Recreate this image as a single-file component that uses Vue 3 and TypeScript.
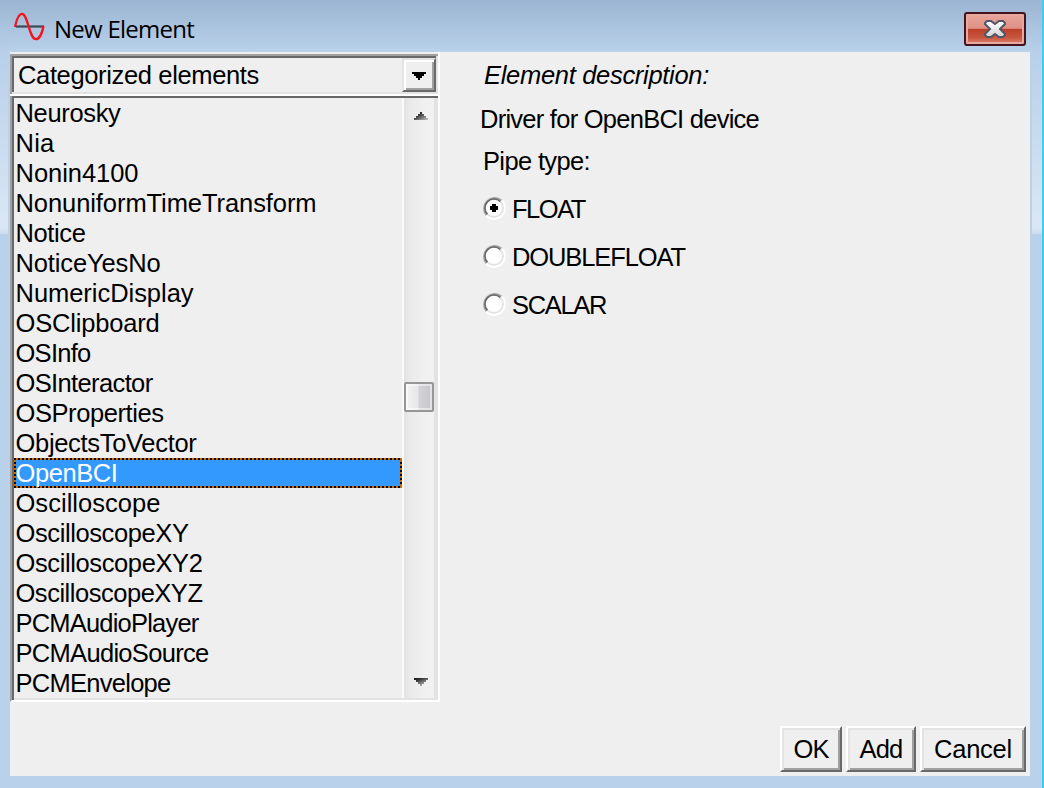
<script setup lang="ts">
import { ref } from 'vue'

interface Label {
  text: string
  width: number
}

const elements: Label[] = [
  { text: 'Neurosky', width: 105 },
  { text: 'Nia', width: 39 },
  { text: 'Nonin4100', width: 123 },
  { text: 'NonuniformTimeTransform', width: 301 },
  { text: 'Notice', width: 70 },
  { text: 'NoticeYesNo', width: 145 },
  { text: 'NumericDisplay', width: 178 },
  { text: 'OSClipboard', width: 144 },
  { text: 'OSInfo', width: 75 },
  { text: 'OSInteractor', width: 137 },
  { text: 'OSProperties', width: 148 },
  { text: 'ObjectsToVector', width: 181 },
  { text: 'OpenBCI', width: 102 },
  { text: 'Oscilloscope', width: 145 },
  { text: 'OscilloscopeXY', width: 173 },
  { text: 'OscilloscopeXY2', width: 187 },
  { text: 'OscilloscopeXYZ', width: 187 },
  { text: 'PCMAudioPlayer', width: 183 },
  { text: 'PCMAudioSource', width: 193 },
  { text: 'PCMEnvelope', width: 155 },
]
const pipeTypes: Label[] = [
  { text: 'FLOAT', width: 73 },
  { text: 'DOUBLEFLOAT', width: 173 },
  { text: 'SCALAR', width: 94 },
]
const actions: Label[] = [
  { text: 'OK', width: 35 },
  { text: 'Add', width: 43 },
  { text: 'Cancel', width: 78 },
]

const selected = ref('OpenBCI')
const pipe = ref('FLOAT')

// Adjusts tracking so that a label takes up its given width.
const vFit = {
  mounted(el: HTMLElement, binding: { value: number }) {
    const natural = el.getBoundingClientRect().width
    const count = (el.textContent ?? '').length
    el.style.letterSpacing = `${(binding.value - natural) / count}px`
  },
}
</script>

<template>
  <div class="window">
    <header class="titlebar">
      <svg class="logo" width="32" height="30" viewBox="0 0 32 30">
        <path d="M2 14.500H30" stroke="#3d4858" stroke-width="2.200" />
        <path d="M1 15C3 5 5 1.800 8 1.800C14 1.800 15 27.200 22 27.200C25 27.200 28 22 29.500 14" fill="none" stroke="#f5141c" stroke-width="2.300" />
      </svg>
      <h1 class="title"><span v-fit="140">New Element</span></h1>
      <button class="close" aria-label="Close">
        <svg width="22" height="18" viewBox="0 0 22 18">
          <defs>
            <linearGradient id="crossFill" x1="0" y1="0" x2="0" y2="1">
              <stop offset="0" stop-color="#fff" />
              <stop offset="1" stop-color="#d4d4d4" />
            </linearGradient>
          </defs>
          <path d="M3 1H7L11 4L15 1H19L21 3V4L16 9L21 14V15L19 17H15L11 14L7 17H3L1 15V14L6 9L1 4V3Z" fill="url(#crossFill)" stroke="#535666" stroke-width="2" />
        </svg>
      </button>
    </header>

    <main class="body">
      <section class="left">
        <div class="combo">
          <span class="combo-text"><span v-fit="241">Categorized elements</span></span>
          <button class="drop" aria-label="Open">
            <svg width="14" height="8" viewBox="0 0 14 8" shape-rendering="crispEdges"><path d="M0 0H14V2H12V4H10V6H8V8H6V6H4V4H2V2H0Z" /></svg>
          </button>
        </div>
        <div class="listbox">
          <ul class="list">
            <li v-for="item in elements" :key="item.text" :class="{ selected: item.text === selected }" @click="selected = item.text">
              <span v-fit="item.width">{{ item.text }}</span>
            </li>
          </ul>
          <div class="scrollbar">
            <svg class="arrow" width="14" height="8" viewBox="0 0 14 8" shape-rendering="crispEdges">
              <defs><linearGradient id="arrowUp" x1="0" y1="0" x2="1" y2="1"><stop offset=".25" stop-color="#222" /><stop offset="1" stop-color="#c4c4c4" /></linearGradient></defs>
              <path d="M6 0H8V2H10V4H12V6H14V8H0V6H2V4H4V2H6Z" fill="url(#arrowUp)" />
            </svg>
            <div class="thumb"></div>
            <svg class="arrow" width="14" height="8" viewBox="0 0 14 8" shape-rendering="crispEdges">
              <defs><linearGradient id="arrowDown" x1="0" y1="0" x2=".7" y2="1"><stop offset="0" stop-color="#111" /><stop offset=".3" stop-color="#333" /><stop offset="1" stop-color="#c4c4c4" /></linearGradient></defs>
              <path d="M0 0H14V2H12V4H10V6H8V8H6V6H4V4H2V2H0Z" fill="url(#arrowDown)" />
            </svg>
          </div>
        </div>
      </section>

      <section class="right">
        <p class="heading"><span v-fit="225">Element description:</span></p>
        <p class="description"><span v-fit="279">Driver for OpenBCI device</span></p>
        <p class="pipe"><span v-fit="107">Pipe type:</span></p>
        <div v-for="type in pipeTypes" :key="type.text" class="option" @click="pipe = type.text">
          <svg width="24" height="24" viewBox="0 0 24 24">
            <circle cx="12" cy="12" r="10" fill="#fff" />
            <path d="M4.600 19.400A10.500 10.500 0 0 1 19.400 4.600" fill="none" stroke="#a0a0a0" stroke-width="2" />
            <path d="M5.600 18.400A9 9 0 0 1 18.400 5.600" fill="none" stroke="#696969" stroke-width="1.500" />
            <path d="M18.400 5.600A9 9 0 0 1 5.600 18.400" fill="none" stroke="#e3e3e3" stroke-width="2" />
            <path d="M19.800 4.200A11 11 0 0 1 4.200 19.800" fill="none" stroke="#fff" stroke-width="2" />
            <path v-if="pipe === type.text" d="M10 8H14V10H16V14H14V16H10V14H8V10H10Z" shape-rendering="crispEdges" />
          </svg>
          <span v-fit="type.width">{{ type.text }}</span>
        </div>
      </section>

      <footer class="actions">
        <button v-for="action in actions" :key="action.text" class="action" :class="action.text.toLowerCase()">
          <span v-fit="action.width">{{ action.text }}</span>
        </button>
      </footer>
    </main>
  </div>
</template>

<style>
body {
  margin: 0;
  overflow: hidden;
}
</style>

<style scoped>
* {
  box-sizing: border-box;
}
.window {
  width: 1044px;
  height: 788px;
  padding: 0 12px 12px 10px;
  border-right: 2px solid #43cbf5;
  background:
    linear-gradient(#9bb5d2 0, #b7cfe9 50px, #dbe7f4 228px, #c8dbee 234px, transparent 234px) 0 0 / 8px 100% no-repeat,
    linear-gradient(#9bb5d2 0, #b7cfe9 50px, #dbe7f4 228px, #c8dbee 234px, transparent 234px) 100% 0 / 10px 100% no-repeat,
    linear-gradient(#9bb5d2 0, #b9d1ea 52px);
  font-family: "Liberation Sans", Arial, sans-serif;
  font-size: 25.5px;
  color: #000;
  white-space: nowrap;
}
.titlebar {
  display: flex;
  height: 52px;
  padding: 12px 4px 0 4px;
}
.logo {
  flex: none;
}
.title {
  flex: 1;
  margin: 0 0 0 8px;
  font: 24px/34px "Open Sans", "Noto Sans", sans-serif;
}
.close {
  display: flex;
  align-items: center;
  justify-content: center;
  width: 62px;
  height: 34px;
  padding: 0;
  border: 2px solid #43141f;
  border-radius: 3px;
  background: linear-gradient(#e8a69b, #df9085 48%, #b93f27 50%, #c95941 80%, #dc8575);
  box-shadow: inset 0 0 0 2px #e9a89e;
}
.close svg {
  flex: none;
}
.body {
  display: grid;
  grid-template: 650px 74px / 430px 590px;
  height: 724px;
  background: #efefef;
}
.combo {
  display: flex;
  width: 430px;
  height: 44px;
  padding-top: 2px;
  border-right: 2px solid #fff;
  border-bottom: 2px solid #fff;
  background: linear-gradient(#a0a0a0, #a0a0a0) 0 2px / 428px 2px no-repeat,
    linear-gradient(#696969, #696969) 2px 4px / 424px 2px no-repeat,
    linear-gradient(#a0a0a0, #a0a0a0) 0 2px / 2px 40px no-repeat,
    linear-gradient(#696969, #696969) 2px 4px / 2px 36px no-repeat,
    linear-gradient(#e3e3e3, #e3e3e3) 0 100% / 428px 2px no-repeat,
    linear-gradient(#e3e3e3, #e3e3e3) 426px 4px / 2px 38px no-repeat;
}
.combo-text {
  flex: 1;
  padding: 6px 0 0 8px;
  line-height: 30px;
}
.drop {
  display: flex;
  align-items: center;
  justify-content: center;
  width: 34px;
  height: 34px;
  margin: 4px 2px 0 0;
  padding: 2px 0 0;
  border: 2px solid;
  border-color: #e3e3e3 #696969 #696969 #e3e3e3;
  background: #efefef;
  box-shadow: inset 2px 2px #fff, inset -2px -2px #a0a0a0;
}
.listbox {
  display: flex;
  width: 430px;
  height: 606px;
  padding: 2px;
  border-left: 2px solid #a0a0a0;
  border-right: 2px solid #fff;
  border-bottom: 2px solid #fff;
  box-shadow: inset 2px 2px #696969, inset -2px -2px #e3e3e3;
}
.list {
  width: 388px;
  margin: 0;
  padding: 0;
  list-style: none;
}
.list li {
  height: 30px;
  padding-left: 1.5px;
  line-height: 30px;
}
.list li.selected {
  color: #fff;
  background:
    repeating-linear-gradient(90deg, #000 0 2px, #d06800 2px 4px) 0 0 / 100% 2px no-repeat,
    repeating-linear-gradient(90deg, #000 0 2px, #d06800 2px 4px) 0 100% / 100% 2px no-repeat,
    repeating-linear-gradient(#000 0 2px, #d06800 2px 4px) 0 0 / 2px 100% no-repeat,
    repeating-linear-gradient(#000 0 2px, #d06800 2px 4px) 100% 0 / 2px 100% no-repeat,
    #3399ff;
}
.scrollbar {
  display: flex;
  flex-direction: column;
  align-items: center;
  justify-content: space-between;
  width: 34px;
  padding: 14px 0 12px;
  border-left: 2px solid #fafafa;
  border-right: 2px solid #e3e3e3;
  background: linear-gradient(90deg, #e3e3e3 0 2px, #e9e9e9 4px, #f0f0f0 20px, #f1f1f1);
}
.arrow {
  margin-left: 4px;
}
.thumb {
  width: 30px;
  height: 30px;
  margin-top: -5px;
  border: 2px solid #969696;
  border-radius: 2px;
  background: linear-gradient(90deg, #f4f4f4, #e6e6e7 46%, #d3d3d7 50%, #c5c5cb);
  box-shadow: inset 0 0 0 2px rgba(255, 255, 255, .5);
}
.right {
  padding: 8px 0 0 42px;
}
.right p {
  height: 30px;
  margin: 0;
  line-height: 30px;
}
.right .heading {
  margin-left: 2px;
  font-style: italic;
}
.right .description {
  margin-top: 14px;
  margin-left: -2px;
}
.right .pipe {
  margin-top: 12px;
  margin-left: 1px;
}
.option {
  display: flex;
  height: 30px;
  margin-top: 18px;
  line-height: 30px;
}
.option svg {
  flex: none;
  margin: 2px 6px 0 0;
}
.actions {
  grid-column: 2;
  display: flex;
  justify-content: flex-end;
  gap: 4px;
  padding: 24px 4px 0 0;
}
.action {
  height: 46px;
  padding: 0;
  border: 2px solid;
  border-color: #fff #696969 #696969 #fff;
  background: #efefef;
  box-shadow: inset 2px 2px #e3e3e3, inset -2px -2px #a0a0a0;
  font: inherit;
  line-height: 42px;
  color: #000;
}
.ok {
  width: 62px;
}
.add {
  width: 70px;
}
.cancel {
  width: 106px;
}
</style>
